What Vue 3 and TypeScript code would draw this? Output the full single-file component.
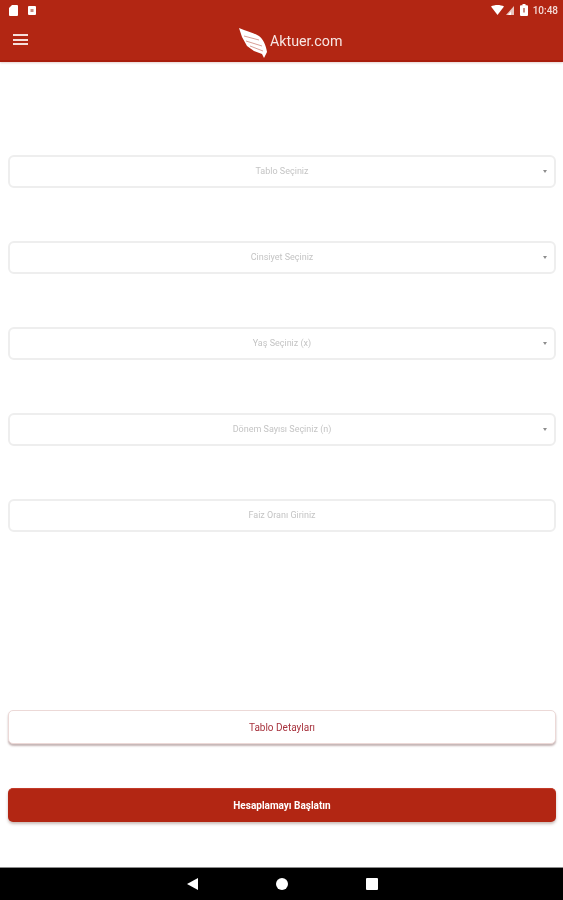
<template>
  <div class="screen">
    <header class="top">
      <div class="status">
        <div class="status-left">
          <svg width="9" height="11" viewBox="0 0 9 11"><path d="M3 0H8a1 1 0 0 1 1 1V10a1 1 0 0 1-1 1H1a1 1 0 0 1-1-1V3Z" fill="#fff" /></svg>
          <svg width="8" height="9" viewBox="0 0 8 9"><rect width="8" height="9" rx="1" fill="#fff" /><rect x="2.500" y="3" width="3" height="3" fill="#c98a80" /></svg>
        </div>
        <div class="status-right">
          <svg width="13" height="10" viewBox="0 0 13 10"><path d="M0 1.500C3.500 -0.500 9.500 -0.500 13 1.500L6.500 10Z" fill="#fff" /></svg>
          <svg width="8" height="9" viewBox="0 0 8 9"><path d="M0 9 8 0V9Z" fill="#e9c4bd" /><path d="M2 9 5 5.600V9Z" fill="#fff" /></svg>
          <svg class="battery" width="8" height="12" viewBox="0 0 8 12"><path d="M2.500 0H5.500V1.200H7a1 1 0 0 1 1 1V11a1 1 0 0 1-1 1H1a1 1 0 0 1-1-1V2.200a1 1 0 0 1 1-1H2.500Z" fill="#fff" /><rect x="3" y="4" width="2" height="4.500" fill="#c98a80" /></svg>
          <span class="clock">10:48</span>
        </div>
      </div>
      <div class="toolbar">
        <button class="menu" type="button" aria-label="Menü">
          <span></span><span></span><span></span>
        </button>
        <div class="brand">
          <svg width="28" height="30" viewBox="0 0 28 30">
            <path d="M0 0C7 3 15 5 20 8C24 11 27 17 28 24L25 30L23 26L15 23L8 18L3 9Z" fill="#fff" />
            <path d="M5 8 20 12M7 13 23 18M11 18 24 23" stroke="#d9a097" stroke-width="1" fill="none" />
          </svg>
          <span>Aktuer.com</span>
        </div>
      </div>
    </header>

    <main class="content">
      <div class="fields">
        <div v-for="f in fields" :key="f.label" class="field">
          <span>{{ f.label }}</span>
          <i v-if="f.select" class="caret"></i>
        </div>
      </div>
      <div class="actions">
        <button class="btn outline" type="button">Tablo Detayları</button>
        <button class="btn solid" type="button">Hesaplamayı Başlatın</button>
      </div>
    </main>

    <nav class="navbar">
      <svg width="11" height="12" viewBox="0 0 11 12"><path d="M11 0V12L0 6Z" fill="#fff" /></svg>
      <svg width="12" height="12" viewBox="0 0 12 12"><circle cx="6" cy="6" r="6" fill="#fff" /></svg>
      <svg width="12" height="12" viewBox="0 0 12 12"><rect width="12" height="12" rx="1" fill="#fff" /></svg>
    </nav>
  </div>
</template>

<script setup lang="ts">
interface Field {
  label: string
  select: boolean
}

const fields: Field[] = [
  { label: 'Tablo Seçiniz', select: true },
  { label: 'Cinsiyet Seçiniz', select: true },
  { label: 'Yaş Seçiniz (x)', select: true },
  { label: 'Dönem Sayısı Seçiniz (n)', select: true },
  { label: 'Faiz Oranı Giriniz', select: false }
]
</script>

<style>
html,
body {
  margin: 0;
  background: #fff;
}
</style>

<style scoped>
.screen {
  width: 563px;
  height: 900px;
  display: flex;
  flex-direction: column;
  overflow: hidden;
  font-family: Roboto, "Liberation Sans", sans-serif;
  background: #fff;
  filter: blur(0.5px);
}

.top {
  height: 62px;
  flex: none;
  box-sizing: border-box;
  background: #b22613;
  border-bottom: 2px solid #a81d0c;
  box-shadow: 0 1px 2px rgba(120, 20, 10, 0.2);
  color: #fff;
}

.status {
  height: 20px;
  display: flex;
  align-items: center;
  justify-content: space-between;
  padding: 0 5px 2px 9px;
}

.status-left {
  display: flex;
  align-items: center;
  gap: 10px;
}

.status-right {
  display: flex;
  align-items: center;
  gap: 2px;
}

.battery {
  margin-left: 4px;
}

.clock {
  margin-left: 3px;
  font-size: 10px;
  font-weight: 500;
  color: #f4dcd8;
}

.toolbar {
  position: relative;
  display: flex;
  align-items: center;
  height: 40px;
}

.menu {
  display: flex;
  flex-direction: column;
  gap: 2.5px;
  width: 15px;
  margin: 0 0 5px 13px;
  padding: 0;
  border: none;
  background: none;
}

.menu span {
  display: block;
  height: 2px;
  background: #f6dfdb;
}

.brand {
  display: flex;
  align-items: flex-end;
  gap: 3px;
  margin-left: 211px;
  margin-top: 2px;
  height: 30px;
  font-size: 14.25px;
  color: #f7e6e3;
}

.brand span {
  margin-bottom: 9px;
}

.content {
  flex: 1;
  display: flex;
  flex-direction: column;
  justify-content: space-between;
  padding: 93px 7px 45px 8px;
}

.fields {
  display: flex;
  flex-direction: column;
  gap: 53px;
}

.field {
  position: relative;
  height: 33px;
  box-sizing: border-box;
  display: flex;
  align-items: center;
  justify-content: center;
  padding-bottom: 2px;
  border: 2px solid #eeeeee;
  border-radius: 6px;
  font-size: 9px;
  color: #c4c4c4;
}

.caret {
  position: absolute;
  right: 7px;
  top: 13px;
  width: 0;
  height: 0;
  border-left: 2.5px solid transparent;
  border-right: 2.5px solid transparent;
  border-top: 3px solid #8d8d8d;
}

.actions {
  display: flex;
  flex-direction: column;
  gap: 44px;
}

.btn {
  display: block;
  width: 100%;
  height: 34px;
  padding: 0;
  border-radius: 5px;
  font-family: inherit;
  font-size: 10px;
}

.outline {
  background: #fff;
  border: 1px solid #ecd9d7;
  color: #a8343f;
  box-shadow: 0 2px 2px rgba(110, 70, 70, 0.4);
}

.solid {
  background: #b22613;
  border: none;
  border-top: 1px solid #c23a28;
  color: #fff;
  font-weight: 700;
  box-shadow: 0 2px 3px rgba(100, 60, 50, 0.35);
}

.navbar {
  height: 33px;
  flex: none;
  display: flex;
  align-items: center;
  justify-content: center;
  gap: 78px;
  padding-left: 2px;
  background: #000;
  border-top: 1px solid #8c8c8c;
  box-sizing: border-box;
}
</style>
